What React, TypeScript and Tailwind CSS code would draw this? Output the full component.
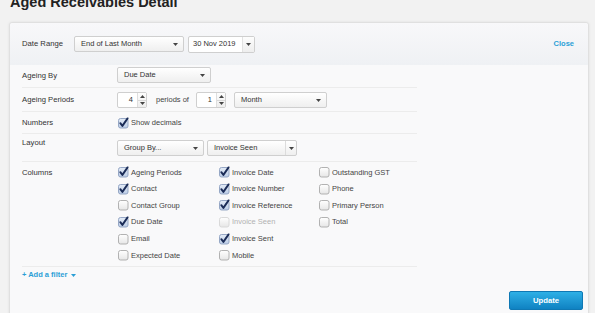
import React from "react";

const Arrow = () => (
  <svg width="5" height="3" viewBox="0 0 5 3" className="block">
    <path d="M0 0 H5 L2.5 3 Z" fill="#444" />
  </svg>
);

function Select({ label, w, sep }: { label: string; w: string; sep?: boolean }) {
  return (
    <div
      className={`${w} h-[16px] flex items-center rounded-[2px] border border-[#cfcfcf] bg-gradient-to-b from-[#ffffff] to-[#efefef] text-[7.5px] text-[#333]`}
    >
      <span className="pl-[6px] flex-1 leading-none">{label}</span>
      {sep ? (
        <div className="h-full w-[11px] border-l border-[#dcdcdc] flex items-center justify-center">
          <Arrow />
        </div>
      ) : (
        <div className="pr-[5px]">
          <Arrow />
        </div>
      )}
    </div>
  );
}

function Spinner({ v }: { v: string }) {
  return (
    <div className="w-[30px] h-[16px] flex rounded-[2px] border border-[#cfcfcf] bg-white text-[7.5px] text-[#333]">
      <div className="flex-1 flex items-center justify-end pr-[4px] leading-none">{v}</div>
      <div className="w-[9px] flex flex-col border-l border-[#dedede] bg-gradient-to-b from-[#fdfdfd] to-[#eeeeee]">
        <div className="flex-1 flex items-center justify-center border-b border-[#d8d8d8]">
          <svg width="5" height="3" viewBox="0 0 5 3"><path d="M0 3 H5 L2.5 0 Z" fill="#444" /></svg>
        </div>
        <div className="flex-1 flex items-center justify-center">
          <svg width="5" height="3" viewBox="0 0 5 3"><path d="M0 0 H5 L2.5 3 Z" fill="#444" /></svg>
        </div>
      </div>
    </div>
  );
}

function Check({ checked, disabled, label }: { checked?: boolean; disabled?: boolean; label: string }) {
  return (
    <div className="flex items-center h-[16.6px] pl-[2px]">
      <svg width="12" height="12" viewBox="0 0 12 12" className="block shrink-0 overflow-visible">
        <defs>
          <linearGradient id="cbg" x1="0" y1="0" x2="0" y2="1">
            <stop offset="0" stopColor="#ffffff" />
            <stop offset="1" stopColor="#e6e6e6" />
          </linearGradient>
          <linearGradient id="cbc" x1="0" y1="0" x2="0" y2="1">
            <stop offset="0" stopColor="#e4ecf7" />
            <stop offset="1" stopColor="#bccde6" />
          </linearGradient>
        </defs>
        <rect
          x="1.5"
          y="1.5"
          width="9.5"
          height="9.5"
          rx="2"
          fill={checked ? "url(#cbc)" : "url(#cbg)"}
          stroke={disabled ? "#d6d6d6" : checked ? "#8c9fbf" : "#a9a9a9"}
          strokeWidth="0.9"
        />
        {checked && (
          <path d="M3.3 6.2 L5.4 8.9 L10.6 1.4" fill="none" stroke="#1b2c57" strokeWidth="1.9" strokeLinecap="round" strokeLinejoin="round" />
        )}
      </svg>
      <span className={`ml-[2px] text-[7.5px] leading-none ${disabled ? "text-[#b2b2b2]" : "text-[#444]"}`}>{label}</span>
    </div>
  );
}

export default function App() {
  const col1: [string, boolean, boolean?][] = [
    ["Ageing Periods", true],
    ["Contact", true],
    ["Contact Group", false],
    ["Due Date", true],
    ["Email", false],
    ["Expected Date", false],
  ];
  const col2: [string, boolean, boolean?][] = [
    ["Invoice Date", true],
    ["Invoice Number", true],
    ["Invoice Reference", true],
    ["Invoice Seen", false, true],
    ["Invoice Sent", true],
    ["Mobile", false],
  ];
  const col3: [string, boolean, boolean?][] = [
    ["Outstanding GST", false],
    ["Phone", false],
    ["Primary Person", false],
    ["Total", false],
  ];
  const label = "w-[95px] shrink-0 text-[7.7px] text-[#333] leading-none";
  return (
    <div className="w-[595px] h-[313px] overflow-hidden bg-[#f2f2f2] font-['Liberation_Sans',Arial,sans-serif]">
      <div className="h-[22px] pl-[10px] overflow-hidden">
        <div className="text-[14.5px] font-bold leading-[14px] mt-[-5px] text-[#222]">Aged Receivables Detail</div>
      </div>
      <div className="ml-[9px] w-[580px] h-[320px] rounded-[3px] border border-[#e0e0e0] bg-[#f9f9fa] shadow-[0_0_3px_rgba(0,0,0,0.08)]">
        <div className="h-[42px] flex items-center pl-[12px] pr-[14px] bg-gradient-to-b from-[#f8f8fa] to-[#eff1f4] rounded-t-[3px]">
          <div className="w-[52px] text-[7.7px] text-[#333] leading-none">Date Range</div>
          <Select label="End of Last Month" w="w-[110px]" />
          <div className="ml-[4px] w-[67px] h-[17px] flex rounded-[2px] border border-[#cfcfcf] bg-white text-[7.5px] text-[#333]">
            <div className="flex-1 flex items-center pl-[4px] leading-none">30 Nov 2019</div>
            <div className="w-[12px] flex items-center justify-center bg-gradient-to-b from-[#fdfdfd] to-[#eeeeee] border-l border-[#e2e2e2]">
              <Arrow />
            </div>
          </div>
          <div className="ml-auto text-[7.5px] font-bold text-[#2b9fd6] leading-none">Close</div>
        </div>
        <div className="pl-[12px]">
          <div className="w-[395px] h-[23px] flex items-start pt-[2px] border-b border-[#ececec]">
            <div className={`${label} pt-[5px]`}>Ageing By</div>
            <Select label="Due Date" w="w-[94px]" />
          </div>
          <div className="w-[395px] h-[24px] flex items-start pt-[4px] border-b border-[#ececec]">
            <div className={`${label} pt-[4px]`}>Ageing Periods</div>
            <Spinner v="4" />
            <div className="w-[49px] pl-[9px] pt-[4px] text-[7.5px] text-[#444] leading-none">periods of</div>
            <Spinner v="1" />
            <div className="ml-[8px]">
              <Select label="Month" w="w-[93px]" />
            </div>
          </div>
          <div className="w-[395px] h-[22px] flex items-center border-b border-[#ececec]">
            <div className={label}>Numbers</div>
            <div className="ml-[-2px]">
              <Check checked label="Show decimals" />
            </div>
          </div>
          <div className="w-[395px] h-[28px] flex items-start border-b border-[#ececec]">
            <div className={`${label} pt-[5px]`}>Layout</div>
            <div className="flex pt-[6px] gap-[3px]">
              <Select label="Group By..." w="w-[87px]" />
              <Select label="Invoice Seen" w="w-[90px]" sep />
            </div>
          </div>
          <div className="w-[395px] h-[105px] flex items-start pt-[2px] border-b border-[#ececec]">
            <div className={`${label} pt-[5px]`}>Columns</div>
            <div className="flex ml-[-2px]">
              <div className="w-[101px]">
                {col1.map(([t, c, d]) => (
                  <Check key={t} label={t} checked={c} disabled={d} />
                ))}
              </div>
              <div className="w-[100px]">
                {col2.map(([t, c, d]) => (
                  <Check key={t} label={t} checked={c} disabled={d} />
                ))}
              </div>
              <div className="w-[100px]">
                {col3.map(([t, c, d]) => (
                  <Check key={t} label={t} checked={c} disabled={d} />
                ))}
              </div>
            </div>
          </div>
          <div className="h-[16px] flex items-center text-[7.5px] font-bold text-[#2b9fd6] leading-none">
            <span>+ Add a filter</span>
            <svg width="5" height="3" viewBox="0 0 5 3" className="ml-[4px]"><path d="M0 0 H5 L2.5 3 Z" fill="#2b9fd6" /></svg>
          </div>
        </div>
        <div className="flex justify-end pr-[5px] pt-[8px]">
          <div className="w-[74px] h-[19px] flex items-center justify-center rounded-[2px] border border-[#0f78b4] bg-gradient-to-b from-[#2eb0e6] to-[#0f82c2] text-white text-[7.7px] font-bold leading-none">
            Update
          </div>
        </div>
      </div>
    </div>
  );
}
